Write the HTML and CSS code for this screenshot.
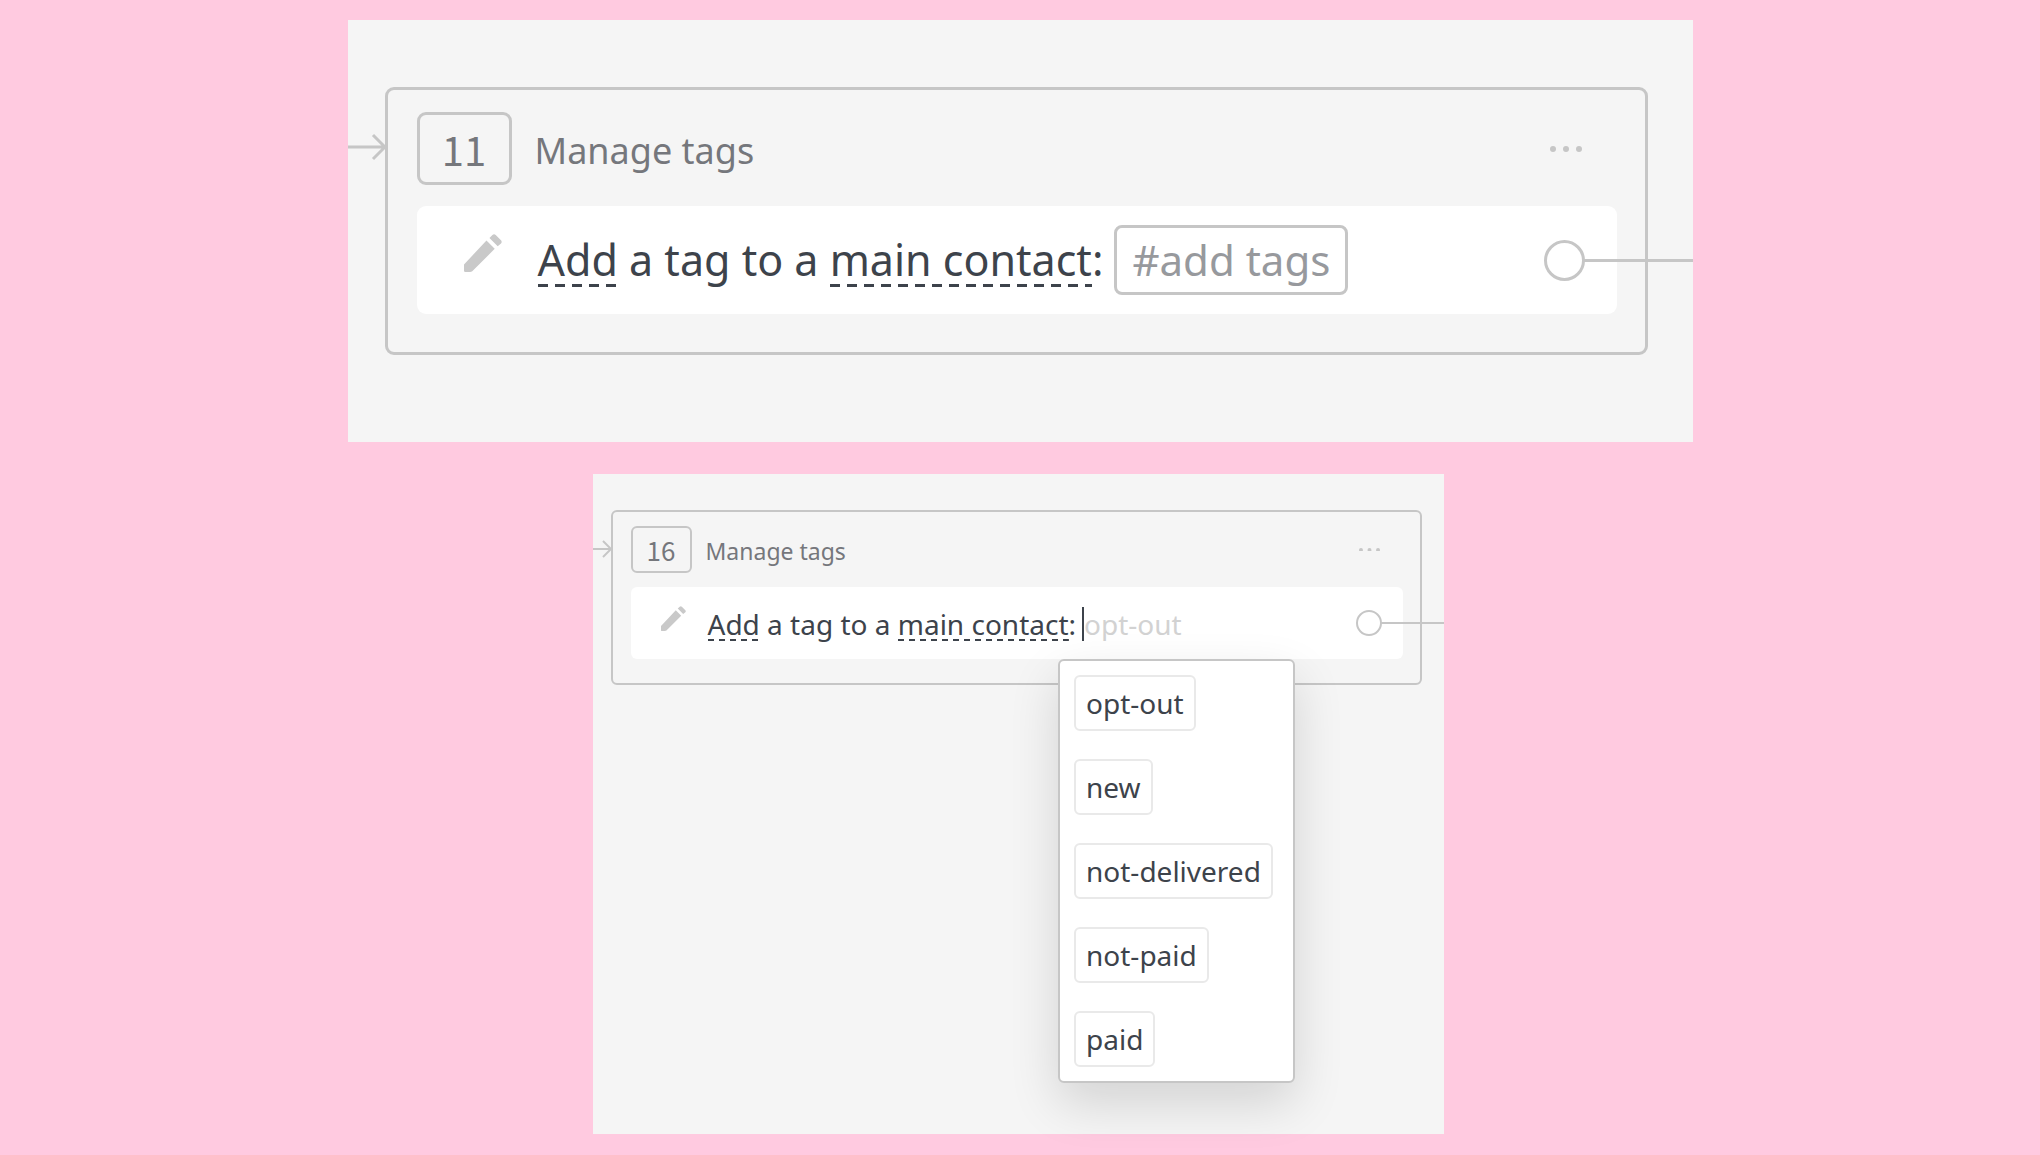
FILE: index.html
```html
<!DOCTYPE html>
<html lang="en">
<head>
<meta charset="utf-8">
<title>Manage tags</title>
<link rel="stylesheet" href="styles.css">
</head>
<body>
<main class="page">
  <section class="panel panel--large">
    <svg class="arrow" viewBox="0 0 39 28" aria-hidden="true"><path d="M0 14H37M25 2l12 12-12 12"/></svg>
    <article class="card">
      <header class="card__head">
        <span class="badge">11</span>
        <h2 class="title">Manage tags</h2>
        <button class="more" type="button" aria-label="More options">
          <svg viewBox="0 0 32 6"><circle cx="3" cy="3" r="3"/><circle cx="16" cy="3" r="3"/><circle cx="29" cy="3" r="3"/></svg>
        </button>
      </header>
      <div class="row">
        <svg class="pencil" viewBox="0 0 115 115" aria-hidden="true"><path d="M0 92 68 20 93 45 25 113Q22 115 18 115H4Q0 115 0 111ZM77 12 86 3Q91-1 96 3L112 19Q116 24 112 29L102 37Z"/></svg>
        <p class="sentence"><button class="choice" type="button">Add</button> a tag to a <button class="choice" type="button">main contact</button>:<button class="add-tags" type="button">#add tags</button></p>
        <span class="port"></span>
      </div>
    </article>
  </section>

  <section class="panel panel--small">
    <svg class="arrow" viewBox="0 0 20 18" aria-hidden="true"><path d="M0 9H18M10 1l8 8-8 8"/></svg>
    <article class="card">
      <header class="card__head">
        <span class="badge">16</span>
        <h2 class="title">Manage tags</h2>
        <button class="more" type="button" aria-label="More options">
          <svg viewBox="0 0 32 6"><circle cx="3" cy="3" r="3"/><circle cx="16" cy="3" r="3"/><circle cx="29" cy="3" r="3"/></svg>
        </button>
      </header>
      <div class="row">
        <svg class="pencil" viewBox="0 0 115 115" aria-hidden="true"><path d="M0 92 68 20 93 45 25 113Q22 115 18 115H4Q0 115 0 111ZM77 12 86 3Q91-1 96 3L112 19Q116 24 112 29L102 37Z"/></svg>
        <div class="sentence"><button class="choice" type="button">Add</button> a tag to a <button class="choice" type="button">main contact</button>:<span class="field">
            <span class="caret"></span><input class="field__input" type="text" placeholder="opt-out" aria-label="Tag">
            <ul class="menu">
              <li><button class="tag" type="button">opt-out</button></li>
              <li><button class="tag" type="button">new</button></li>
              <li><button class="tag" type="button">not-delivered</button></li>
              <li><button class="tag" type="button">not-paid</button></li>
              <li><button class="tag" type="button">paid</button></li>
            </ul>
          </span></div>
        <span class="port"></span>
      </div>
    </article>
  </section>
</main>
</body>
</html>
```
FILE: styles.css
```css
* {
  box-sizing: border-box;
}

body {
  margin: 0;
  background: #ffcae0;
  color: #3d434b;
  font-family: "Noto Sans", "Open Sans", sans-serif;
}

button,
input {
  margin: 0;
  padding: 0;
  border: 0;
  background: none;
  color: inherit;
  font: inherit;
}

.page {
  display: flex;
  flex-direction: column;
  align-items: center;
  gap: 32px;
  padding: 20px 0 21px;
}

/* Sizes shared by everything inside a panel */
.panel--large {
  --line: 3px;
  --radius: 9px;
  --title: 36px;
  --number: 40px;
  --text: 43px;
  --text-line: 54px;
  --icon: 38px;
  --port: 41px;
  --dash: 10px;
  --period: 17px;
  max-width: 1345px;
  padding: 67px 45px 87px 0;
}

.panel--small {
  --line: 2px;
  --radius: 6px;
  --title: 23px;
  --number: 26px;
  --text: 28px;
  --text-line: 34px;
  --icon: 25px;
  --port: 26px;
  --dash: 6px;
  --period: 11px;
  max-width: 851px;
  min-height: 660px;
  margin-right: 4px;
  padding: 36px 22px 0 0;
}

.panel {
  display: flex;
  align-items: flex-start;
  width: 100%;
  background: #f5f5f5;
}

.arrow {
  flex: none;
  fill: none;
  stroke: #c6c6c6;
  stroke-width: var(--line);
}

.panel--large .arrow {
  width: 39px;
  margin: 46px -2px 0 0;
}

.panel--small .arrow {
  width: 20px;
  margin: 30px -2px 0 0;
}

.card {
  flex: 1;
  border: var(--line) solid #c6c6c6;
  border-radius: var(--radius);
}

.panel--large .card {
  padding: 22px 28px 38px 29px;
}

.panel--small .card {
  padding: 14px 17px 24px 18px;
}

.card__head {
  display: flex;
  align-items: center;
}

.panel--large .card__head {
  gap: 23px;
  margin-bottom: 21px;
  padding-right: 35px;
}

.panel--small .card__head {
  gap: 14px;
  margin-bottom: 14px;
  padding-right: 23px;
}

.badge {
  display: flex;
  align-items: center;
  justify-content: center;
  border: var(--line) solid #c6c6c6;
  border-radius: var(--radius);
  color: #75777c;
  font-family: "Noto Sans CJK SC", "Noto Sans", sans-serif;
  font-size: var(--number);
  line-height: 1;
}

.panel--large .badge {
  width: 95px;
  height: 73px;
}

.panel--small .badge {
  width: 61px;
  height: 47px;
}

.title {
  flex: 1;
  margin: 0;
  padding-top: 4px;
  color: #75777c;
  font-size: var(--title);
  font-weight: 400;
  line-height: 1;
}

.more {
  display: flex;
}

.more svg {
  width: 32px;
  fill: #c6c6c6;
}

.panel--small .more svg {
  width: 21px;
}

.row {
  display: flex;
  align-items: center;
  border-radius: var(--radius);
  background: #fff;
}

.panel--large .row {
  height: 108px;
  padding: 0 32px 0 47px;
}

.panel--small .row {
  height: 72px;
  padding: 0 21px 0 30px;
}

.pencil {
  flex: none;
  width: var(--icon);
  fill: #c9c9c9;
}

.panel--large .pencil {
  margin: 0 36px 14px 0;
}

.panel--small .pencil {
  margin: 0 22px 10px 0;
}

.sentence {
  flex: 1;
  margin: 0;
  font-size: var(--text);
  line-height: var(--text-line);
  white-space: nowrap;
}

.panel--small .sentence {
  padding-top: 2px;
}

.choice {
  background: repeating-linear-gradient(90deg, #3d434b 0 var(--dash), transparent 0 var(--period)) bottom / 100% var(--line) no-repeat;
}

.add-tags {
  height: 70px;
  margin-left: 11px;
  padding: 0 15px;
  border: 3px solid #c6c6c6;
  border-radius: 8px;
  color: #97999d;
  font-size: 42px;
}

.port {
  position: relative;
  flex: none;
  width: var(--port);
  height: var(--port);
  border: var(--line) solid #c6c6c6;
  border-radius: 50%;
}

/* Connector running out of the card to the panel's edge */
.port::after {
  content: "";
  position: absolute;
  top: 50%;
  left: 100%;
  height: var(--line);
  margin-top: -1px;
  background: #c6c6c6;
}

.panel--large .port::after {
  width: 111px;
}

.panel--small .port::after {
  width: 64px;
}

.field {
  position: relative;
  display: inline-flex;
  align-items: center;
  margin-left: 6px;
  vertical-align: top;
}

.caret {
  width: 2px;
  height: 34px;
  background: #3d434b;
}

.field__input {
  width: 140px;
  height: 34px;
  outline: 0;
}

.field__input::placeholder {
  color: #d2d2d2;
  opacity: 1;
}

.menu {
  position: absolute;
  z-index: 1;
  top: 100%;
  left: -24px;
  display: flex;
  flex-direction: column;
  gap: 28px;
  width: 237px;
  margin: 18px 0 0;
  padding: 14px;
  border: 2px solid #c6c6c6;
  border-radius: 6px;
  background: #fff;
  box-shadow: 0 20px 50px rgba(0, 0, 0, 0.14);
  list-style: none;
}

.menu li {
  display: flex;
}

.tag {
  height: 56px;
  padding: 0 10px;
  border: 2px solid #e9e9e9;
  border-radius: 6px;
}
```
